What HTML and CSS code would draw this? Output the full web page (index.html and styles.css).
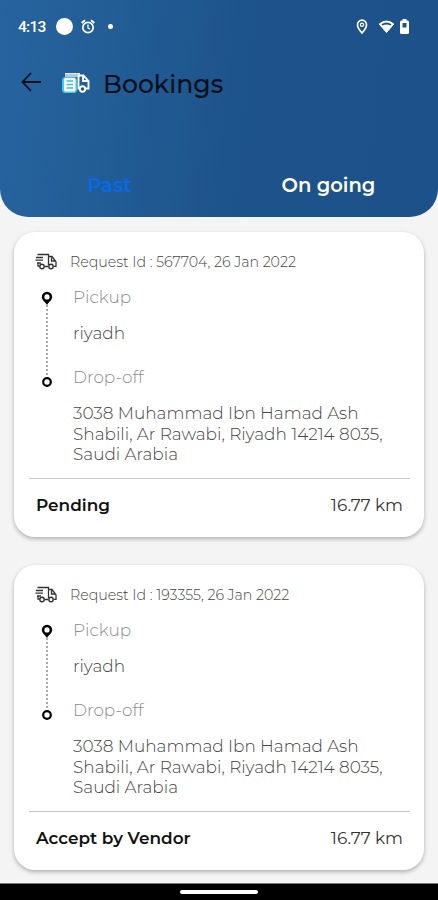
FILE: index.html
```html
<!DOCTYPE html>
<html lang="en">
<head>
<meta charset="utf-8">
<meta name="viewport" content="width=device-width, initial-scale=1">
<title>Bookings</title>
<link rel="stylesheet" href="styles.css">
</head>
<body>
<svg class="defs" width="0" height="0">
  <symbol id="truck" viewBox="0 0 22 18">
    <path d="M2.500 1.500H13.500V12M13.500 3.500H17L20 7.500L21 9V13.300H19M13 13.500H9.500M1 4.500H8M.5 7.200H8M2 10H6M3 10V13H4.500M16.500 4.500V8H20" fill="none" stroke="currentColor" stroke-width="1.300"/>
    <circle cx="7" cy="13.500" r="2.200" fill="none" stroke="currentColor" stroke-width="1.400"/>
    <circle cx="16" cy="13.500" r="2.200" fill="none" stroke="currentColor" stroke-width="1.400"/>
  </symbol>
  <symbol id="route" viewBox="0 0 12 98">
    <path fill-rule="evenodd" d="M6 .8A5.200 5.200 0 0 0 .8 6C.8 9 4 10.800 6 14C8 10.800 11.200 9 11.200 6A5.200 5.200 0 0 0 6 .8ZM6 3.300A2.600 2.600 0 1 1 6 8.500A2.600 2.600 0 1 1 6 3.300Z"/>
    <path d="M6 14V86" stroke="#555" stroke-width="1" stroke-dasharray="2 2"/>
    <circle cx="6" cy="91" r="3.800" fill="#fff" stroke="#000" stroke-width="2.200"/>
  </symbol>
</svg>
<div class="screen">
  <header class="header">
    <div class="status">
      <span class="time">4:13</span>
      <span class="disc"></span>
      <svg class="alarm" width="14" height="16" viewBox="0 0 14 16" fill="none" stroke="#fff"><circle cx="7" cy="8.500" r="5.200" stroke-width="1.700"/><path d="M.7 4L4 1.200M10 1.200L13.300 4" stroke-width="1.900"/><path d="M7 5.500V9L9 10.200" stroke-width="1.300"/></svg>
      <span class="dot"></span>
      <svg class="loc" width="12" height="16" viewBox="0 0 12 16"><path d="M6 1.200A4.500 4.500 0 0 0 1.500 5.700C1.500 9 6 14 6 14S10.500 9 10.500 5.700A4.500 4.500 0 0 0 6 1.200Z" fill="none" stroke="#fff" stroke-width="1.700"/><circle cx="6" cy="5.800" r="1.600" fill="none" stroke="#fff" stroke-width="1.200"/></svg>
      <svg class="wifi" width="17" height="16" viewBox="0 0 17 16"><path d="M1.200 5Q8.500-1 15.800 5L8.500 13.500Z" fill="#fff" stroke="#fff" stroke-linejoin="round"/><path d="M3.500 5.200Q8.500 1.800 13.500 5.200L12.500 6.500Q8.500 4.500 4.500 6.500Z" fill="#1d528a"/></svg>
      <svg class="battery" width="9" height="16" viewBox="0 0 9 16"><path d="M2.500 0H6.500V1.500H7.500Q9 1.500 9 3V13.500Q9 15 7.500 15H1.500Q0 15 0 13.500V3Q0 1.500 1.500 1.500H2.500Z" fill="#fff"/><path d="M2.500 4H6.500V8.500H2.500Z" fill="#1d528a"/></svg>
    </div>
    <div class="titlebar">
      <svg class="back" width="20" height="20" viewBox="0 0 20 20" fill="none" stroke="#07111e" stroke-width="1.800"><path d="M20 10H1.500M10 1L1.500 10L10 19"/></svg>
      <svg class="logo" width="28" height="22" viewBox="0 0 28 22">
        <path d="M3 1H18V5H3Z" fill="#b8c7d9"/><path d="M3 1.500H18" stroke="#e6edf5"/>
        <path d="M16.500 3V16.500H18M17 3.500H21.500L26.500 9V16.500H24M21 4V9H26.500" fill="none" stroke="#fff" stroke-width="1.900"/>
        <circle cx="20.500" cy="17" r="2.700" fill="#1f568e" stroke="#fff" stroke-width="1.900"/>
        <rect x="0" y="5" width="15" height="16" rx="3.500" fill="#35cdf0"/>
        <rect x="2" y="6" width="11.500" height="13.500" rx="1.500" fill="#fff"/>
        <path d="M4.500 9H11M4.500 12.500H11M4.500 16H11" stroke="#35bde4" stroke-width="1.400"/>
      </svg>
      <h1 class="title">Bookings</h1>
    </div>
    <nav class="tabs"><span class="tab active">Past</span><span class="tab">On going</span></nav>
  </header>
  <main class="list">
    <article class="card">
      <div class="request"><svg class="truck" width="22" height="18"><use href="#truck"/></svg><span class="rid">Request Id : 567704, 26 Jan 2022</span></div>
      <div class="trip">
        <svg class="route" width="12" height="98"><use href="#route"/></svg>
        <div class="stops">
          <div class="label pickup">Pickup</div>
          <div class="place">riyadh</div>
          <div class="label dropoff">Drop-off</div>
          <div class="address">3038 Muhammad Ibn Hamad Ash<br>Shabili, Ar Rawabi, Riyadh 14214 8035,<br>Saudi Arabia</div>
        </div>
      </div>
      <div class="summary"><span class="state">Pending</span><span class="distance">16.77 km</span></div>
    </article>
    <article class="card">
      <div class="request"><svg class="truck" width="22" height="18"><use href="#truck"/></svg><span class="rid">Request Id : 193355, 26 Jan 2022</span></div>
      <div class="trip">
        <svg class="route" width="12" height="98"><use href="#route"/></svg>
        <div class="stops">
          <div class="label pickup">Pickup</div>
          <div class="place">riyadh</div>
          <div class="label dropoff">Drop-off</div>
          <div class="address">3038 Muhammad Ibn Hamad Ash<br>Shabili, Ar Rawabi, Riyadh 14214 8035,<br>Saudi Arabia</div>
        </div>
      </div>
      <div class="summary"><span class="state">Accept by Vendor</span><span class="distance">16.77 km</span></div>
    </article>
  </main>
  <footer class="navbar"><span class="handle"></span></footer>
</div>
</body>
</html>
```
FILE: styles.css
```css
* { box-sizing: border-box; }
body { margin: 0; background: #f4f4f4; font-family: Montserrat, Inter, sans-serif; color: #444; }
.defs { display: block; height: 0; }
.screen { width: 438px; height: 900px; display: flex; flex-direction: column; overflow: hidden; white-space: nowrap; }
.header { height: 217px; flex: none; border-radius: 0 0 28px 28px; background: linear-gradient(96deg, #27639f 0%, #225d95 25%, #1d528a 58%, #1c5189 100%); display: flex; flex-direction: column; }
.status { height: 53px; padding: 0 29px 0 18px; display: flex; align-items: center; }
.time { width: 38px; font: 500 15.500px/20px Roboto, sans-serif; letter-spacing: -.7px; color: #fff; }
.disc { width: 17px; height: 17px; border-radius: 50%; background: #fff; }
.alarm { margin-left: 8px; }
.dot { width: 5px; height: 5px; border-radius: 50%; background: #fff; margin-left: 13px; }
.loc { margin-left: auto; }
.wifi { margin-left: 10px; }
.battery { margin-left: 5px; }
.titlebar { height: 62px; display: flex; align-items: center; padding-left: 21px; }
.back { margin-top: -4px; }
.logo { margin-left: 21px; margin-top: -3px; }
.title { margin: 0 0 0 13px; font-size: 25px; line-height: 34px; font-weight: 500; letter-spacing: .05px; color: #06101c; }
.tabs { margin-top: 38px; height: 64px; display: grid; grid-template-columns: 1fr 1fr; line-height: 64px; text-align: center; font-size: 19.500px; font-weight: 600; color: #fff; }
.active { color: #0869e8; }
.list { flex: 1; padding: 15px 14px 0; display: flex; flex-direction: column; gap: 28.500px; }
.card { height: 304.500px; flex: none; background: #fff; border-radius: 21px; box-shadow: 0 2px 4px rgba(0,0,0,.28); padding: 18px 14px 0 15px; display: flex; flex-direction: column; }
.request { height: 24px; display: flex; align-items: center; padding-left: 6px; }
.truck { color: #333; }
.rid { margin-left: 13px; font-size: 14.200px; font-weight: 300; color: #444; }
.trip { height: 203.500px; display: flex; padding-left: 12px; }
.route { margin-top: 17px; flex: none; }
.stops { margin-left: 20px; font-size: 16.900px; font-weight: 300; line-height: 20px; }
.label { color: #8c8c8c; margin-top: 13px; font-weight: 300; }
.place { margin-top: 16px; }
.dropoff { margin-top: 24px; }
.address { margin-top: 16px; line-height: 20.500px; }
.summary { border-top: 1px solid #c8c8c8; height: 53px; display: flex; justify-content: space-between; align-items: center; padding: 0 7px; }
.state { font-size: 16.900px; font-weight: 600; color: #111; }
.distance { font-size: 16.900px; font-weight: 400; color: #333; }
.navbar { height: 17px; flex: none; background: #000; border-top: 1px solid #777; display: flex; justify-content: center; align-items: center; }
.handle { width: 78px; height: 4px; border-radius: 2px; background: #fff; }
```
